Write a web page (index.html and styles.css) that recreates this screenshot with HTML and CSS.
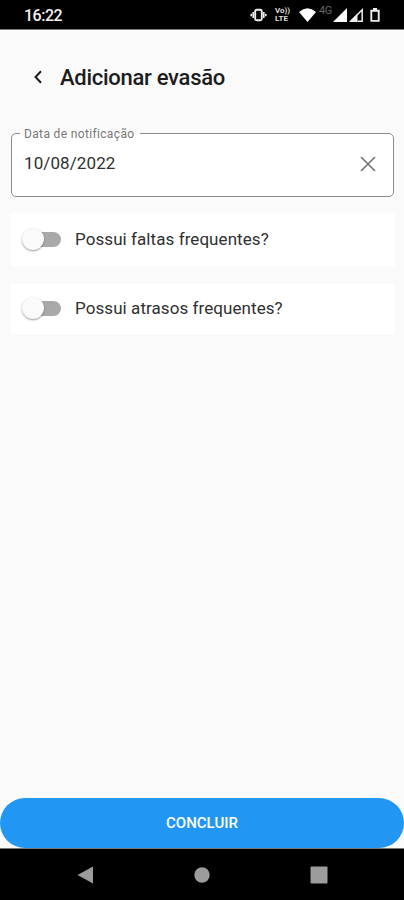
FILE: index.html
```
<!DOCTYPE html>
<html lang="pt-BR">
<head>
<meta charset="utf-8">
<title>Adicionar evasão</title>
<link rel="stylesheet" href="styles.css">
</head>
<body>
<div class="screen">
  <header class="status">
    <span class="clock">16:22</span>
    <div class="indicators">
      <svg class="vibrate" width="17" height="14" viewBox="0 0 17 14"><rect x="5.200" y="1.700" width="6.600" height="10.600" rx="1.500" fill="none" stroke="#eee" stroke-width="1.900"/><path d="M3.200 4v6M1.200 5.800v2.400M13.800 4v6M15.800 5.800v2.400" stroke="#eee" stroke-width="1.600"/></svg>
      <span class="volte"><span>Vo))</span><span>LTE</span></span>
      <svg class="wifi" width="17" height="14" viewBox="0 0 17 14"><path d="M0 4Q8.500-3.400 17 4L8.500 14Z" fill="#fff"/></svg>
      <span class="net">4G</span>
      <svg class="signal" width="14" height="14" viewBox="0 0 14 14"><path d="M0 14L14 0V14Z" fill="#fff"/></svg>
      <svg class="signal-two" width="14" height="14" viewBox="0 0 14 14"><path d="M1.800 13.200L13.200 1.800V13.200H8.500" fill="none" stroke="#eee" stroke-width="1.500"/><path d="M0 14L8.500 5.500V14Z" fill="#eee"/></svg>
      <svg class="battery" width="10" height="14" viewBox="0 0 10 14"><path d="M1.300 2.800H8.700V12.900H1.300Z" fill="none" stroke="#eee" stroke-width="1.900"/><path d="M3 0H7V3H3Z" fill="#eee"/></svg>
    </div>
  </header>
  <main class="content">
    <div class="titlebar">
      <svg class="back" width="8" height="14" viewBox="0 0 8 14"><path d="M7 1.200L1.500 7L7 12.800" fill="none" stroke="#1c1c1c" stroke-width="2"/></svg>
      <h1>Adicionar evasão</h1>
    </div>
    <fieldset class="field">
      <legend>Data de notificação</legend>
      <div class="field-row">
        <span class="date">10/08/2022</span>
        <svg width="16" height="16" viewBox="0 0 16 16"><path d="M1 1L15 15M15 1L1 15" stroke="#777" stroke-width="1.700"/></svg>
      </div>
    </fieldset>
    <div class="option first"><span class="switch"><span class="knob"></span></span><span class="label">Possui faltas frequentes?</span></div>
    <div class="option second"><span class="switch"><span class="knob"></span></span><span class="label">Possui atrasos frequentes?</span></div>
  </main>
  <button class="submit">CONCLUIR</button>
  <nav class="navbar">
    <svg width="17" height="18" viewBox="0 0 17 18"><path d="M0.500 9L16 0.500V17.500Z" fill="#9c9c9c"/></svg>
    <svg width="16" height="16" viewBox="0 0 16 16"><circle cx="8" cy="8" r="7.700" fill="#9c9c9c"/></svg>
    <svg width="18" height="18" viewBox="0 0 18 18"><rect x="0.500" y="0.500" width="17" height="17" rx="1" fill="#9c9c9c"/></svg>
  </nav>
</div>
</body>
</html>
```
FILE: styles.css
```
* { box-sizing: border-box; }
body { margin: 0; font-family: Roboto, sans-serif; background: #fafafa; }
svg { display: block; flex: none; }
.screen { width: 404px; height: 900px; display: flex; flex-direction: column; background: #fafafa; overflow: hidden; }
.status { height: 30px; flex: none; background: #000; border-bottom: 1px solid #777; display: flex; justify-content: space-between; padding: 8px 24px 0 24px; }
.clock { color: #f2f2f2; font-size: 16px; line-height: 16px; font-weight: 500; letter-spacing: -0.5px; }
.indicators { display: flex; align-items: flex-start; }
.vibrate { margin-right: 8px; }
.volte { width: 18px; display: flex; flex-direction: column; gap: 0; color: #ddd; font-size: 8px; line-height: 8px; font-weight: 700; margin: -1px 6px 0 0; }
.net { width: 13px; color: #666; font-size: 11px; line-height: 6px; margin: 0 1px 0 3px; letter-spacing: -0.5px; }
.signal { margin-right: 2px; }
.signal-two { margin-right: 7px; }
.content { flex: 1; padding: 33px 9px 0 11px; border-top: 1px solid #fff; }
.titlebar { height: 28px; display: flex; align-items: center; padding-left: 23px; }
.back { margin-top: -2px; }
h1 { margin: 0 0 0 18px; font-size: 22px; line-height: 28px; font-weight: 500; color: #1c1c1c; white-space: nowrap; letter-spacing: -0.28px; }
.field { width: 383px; height: 71px; margin: 34px 0 0; padding: 0 17px 0 12px; border: 1px solid #8c8c8c; border-radius: 5px; background: #fff; min-width: 0; }
legend { padding: 1px 0 0 4px; width: 120px; height: 15px; margin-left: -4px; font-size: 12px; line-height: 14px; color: #777; white-space: nowrap; letter-spacing: 0.35px; }
.field-row { display: flex; justify-content: space-between; align-items: center; height: 20px; margin-top: 13px; }
.date { font-size: 17px; line-height: 20px; color: #303030; letter-spacing: 0.1px; margin-top: -2px; }
.option { width: 384px; background: #fff; display: flex; align-items: center; padding-left: 14px; }
.first { height: 53px; margin-top: 16px; }
.second { height: 50px; margin-top: 18px; }
.switch { position: relative; width: 36px; height: 15px; border-radius: 8px; background: #a9a9a9; }
.knob { position: absolute; left: -3px; top: -4px; width: 22px; height: 22px; border-radius: 50%; background: #fafafa; box-shadow: 0 1px 2px #0006; }
.second .switch { margin-top: -2px; }
.label { margin: -2px 0 0 14px; font-size: 17px; line-height: 22px; color: #303030; letter-spacing: 0.07px; white-space: nowrap; }
.submit { height: 50px; flex: none; border: 0; border-radius: 25px; background: #2196f3; color: #fff; font-family: inherit; font-size: 15px; line-height: 18px; font-weight: 500; padding: 0; }
.navbar { height: 52px; flex: none; background: #000; border-top: 1px solid #777; display: flex; justify-content: space-between; align-items: center; padding: 0 76px 0 77px; }
```
